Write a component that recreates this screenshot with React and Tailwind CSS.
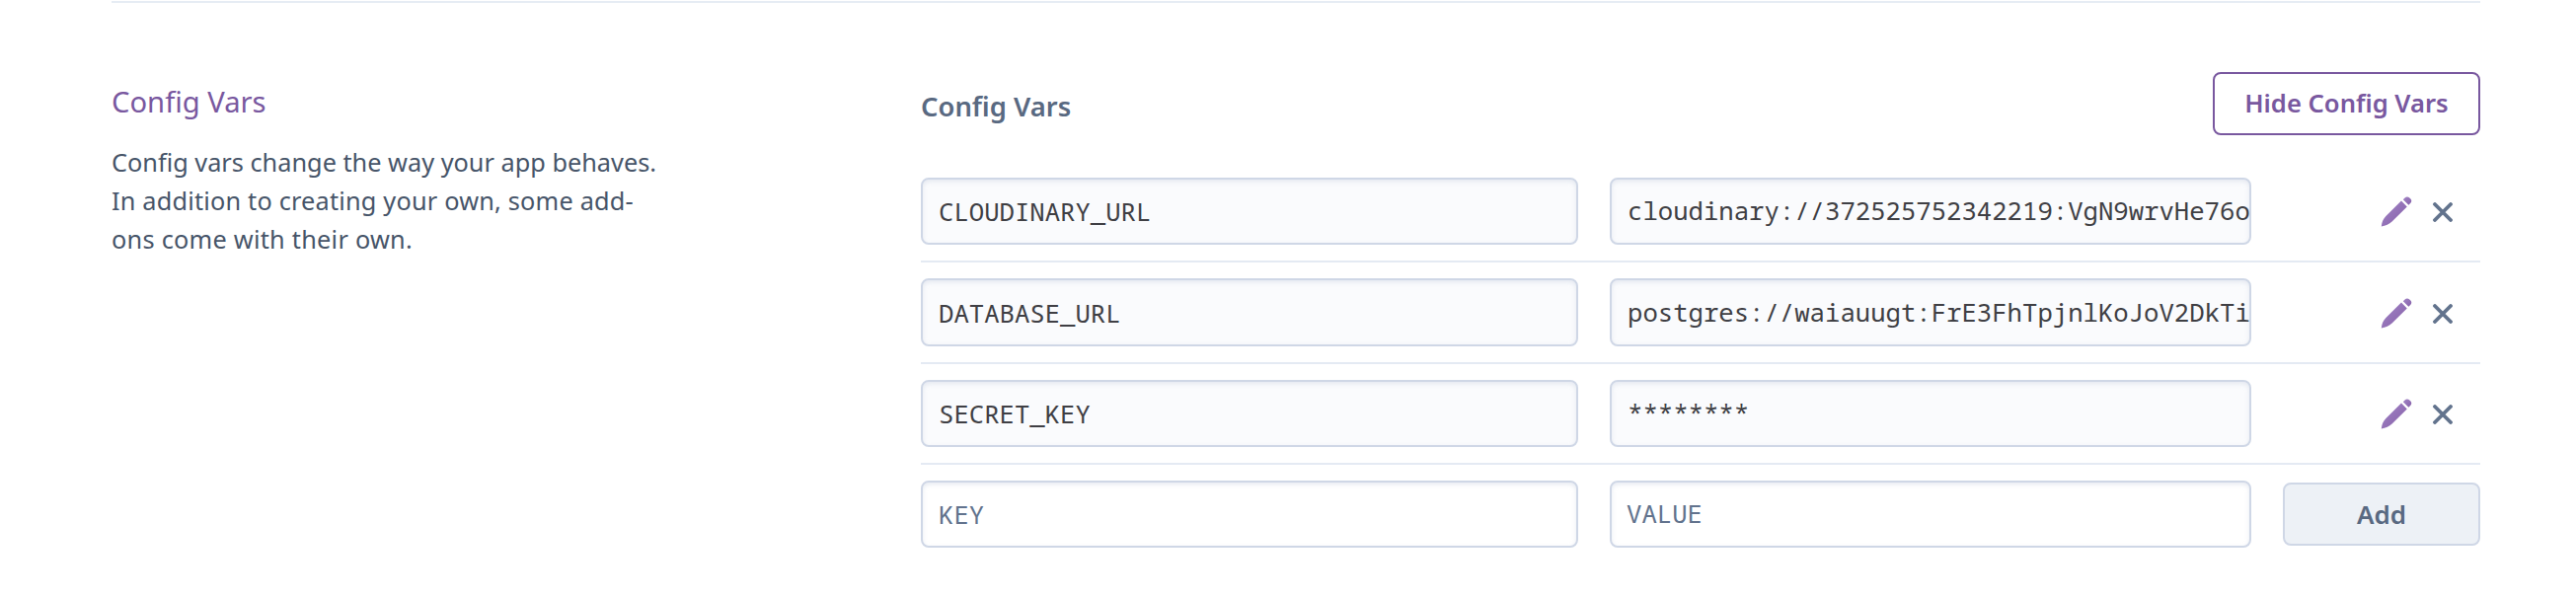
import React from 'react';

const VARS = [
  { name: 'CLOUDINARY_URL', value: 'cloudinary://372525752342219:VgN9wrvHe76o', height: 'h-[68px]', nameNudge: 'pt-px', valueNudge: 'pb-px' },
  { name: 'DATABASE_URL', value: 'postgres://waiauugt:FrE3FhTpjnlKoJoV2DkTi', height: 'h-[69px]', nameNudge: 'pt-0.5', valueNudge: 'pt-px' },
  { name: 'SECRET_KEY', value: '********', height: 'h-[68px]', nameNudge: 'pt-px', valueNudge: 'pb-px' },
];

const FIELD =
  'flex shrink-0 items-center overflow-hidden whitespace-pre rounded-lg border-2 border-[#cfd7e6] font-["Noto_Sans_Mono",monospace] text-[25.65px] leading-[36px] shadow-[inset_0_2px_4px_rgba(207,215,230,0.5)]';

function PencilIcon() {
  return (
    <svg width="32" height="32" viewBox="0 0 32 32" fill="url(#pencil)" aria-hidden="true">
      <defs>
        <linearGradient id="pencil" x1="0" y1="0" x2="1" y2="1">
          <stop offset="0" stopColor="#a285c6" />
          <stop offset="1" stopColor="#8660a9" />
        </linearGradient>
      </defs>
      <path d="M21 4.6 26.8 10.4 11.6 25.4C8.9 28.1 5 29.8 0.8 30.4 1.3 26.3 2.7 22.8 5.4 20.1Z" />
      <path d="M22.8 3.2 24.6 1.4C25.9 0.2 28 0.2 29.3 1.4L30.4 2.5C31.6 3.7 31.6 5.5 30.4 6.8L28.4 8.8Z" />
    </svg>
  );
}

function RemoveIcon() {
  return (
    <svg width="20" height="20" viewBox="0 0 20 20" fill="none" stroke="#62738d" strokeWidth="3.8" strokeLinecap="round" aria-hidden="true">
      <path d="M2 2 18 18M18 2 2 18" />
    </svg>
  );
}

function VarRow({ name, value, height, nameNudge, valueNudge }) {
  return (
    <div className="flex border-b-2 border-[#e4eaf3] py-4">
      <div className={`${FIELD} ${height} ${nameNudge} w-[666px] bg-[#fafbfd] pl-4 text-[#3f3f44]`}>{name}</div>
      <div className={`${FIELD} ${height} ${valueNudge} ml-8 w-[650px] bg-[#fafbfd] pl-4 text-[#3f3f44]`}>{value}</div>
      <div className="flex flex-1 items-center justify-end gap-[21px] pr-7 pt-0.5">
        <PencilIcon />
        <RemoveIcon />
      </div>
    </div>
  );
}

export default function App() {
  return (
    <div className='h-[606px] overflow-hidden bg-white pl-[113px] pr-[97px] pt-px font-["Noto_Sans",sans-serif]'>
      <div className="flex border-t-2 border-[#e6ecf4]">
        <section className="w-[820px] shrink-0 pt-[76px]">
          <h2 className="text-[29.2px] leading-[48px] text-[#79589f]">Config Vars</h2>
          <p className="mt-[18px] w-[580px] text-[25.3px] leading-[39px] text-[#475569]">
            Config vars change the way your app behaves.
            <br />
            <span className="tracking-[0.19px]">In addition to creating your own, some add-</span>
            <br />
            <span className="tracking-[0.25px]">ons come with their own.</span>
          </p>
        </section>

        <section className="flex-1 pt-[70px]">
          <div className="flex h-[91px] items-start justify-between">
            <h3 className="pt-[15px] text-[27.4px] font-semibold leading-10 text-[#596981]">Config Vars</h3>
            <button className="h-16 w-[271px] rounded-lg border-2 border-[#79589f] pb-px text-[25.6px] font-semibold leading-10 text-[#79589f]">
              Hide Config Vars
            </button>
          </div>

          {VARS.map((v) => (
            <VarRow key={v.name} {...v} />
          ))}

          <div className="flex items-center pt-4">
            <div className={`${FIELD} h-[68px] w-[666px] bg-white pl-4 pt-px text-[#62738d]`}>KEY</div>
            <div className={`${FIELD} ml-8 h-[68px] w-[650px] bg-white pb-px pl-[15px] text-[#62738d]`}>VALUE</div>
            <button className="ml-8 h-16 w-[200px] rounded-lg border-2 border-[#cfd7e6] bg-[#edf1f6] pb-px text-[26px] font-semibold leading-10 text-[#596981]">
              Add
            </button>
          </div>
        </section>
      </div>
    </div>
  );
}
